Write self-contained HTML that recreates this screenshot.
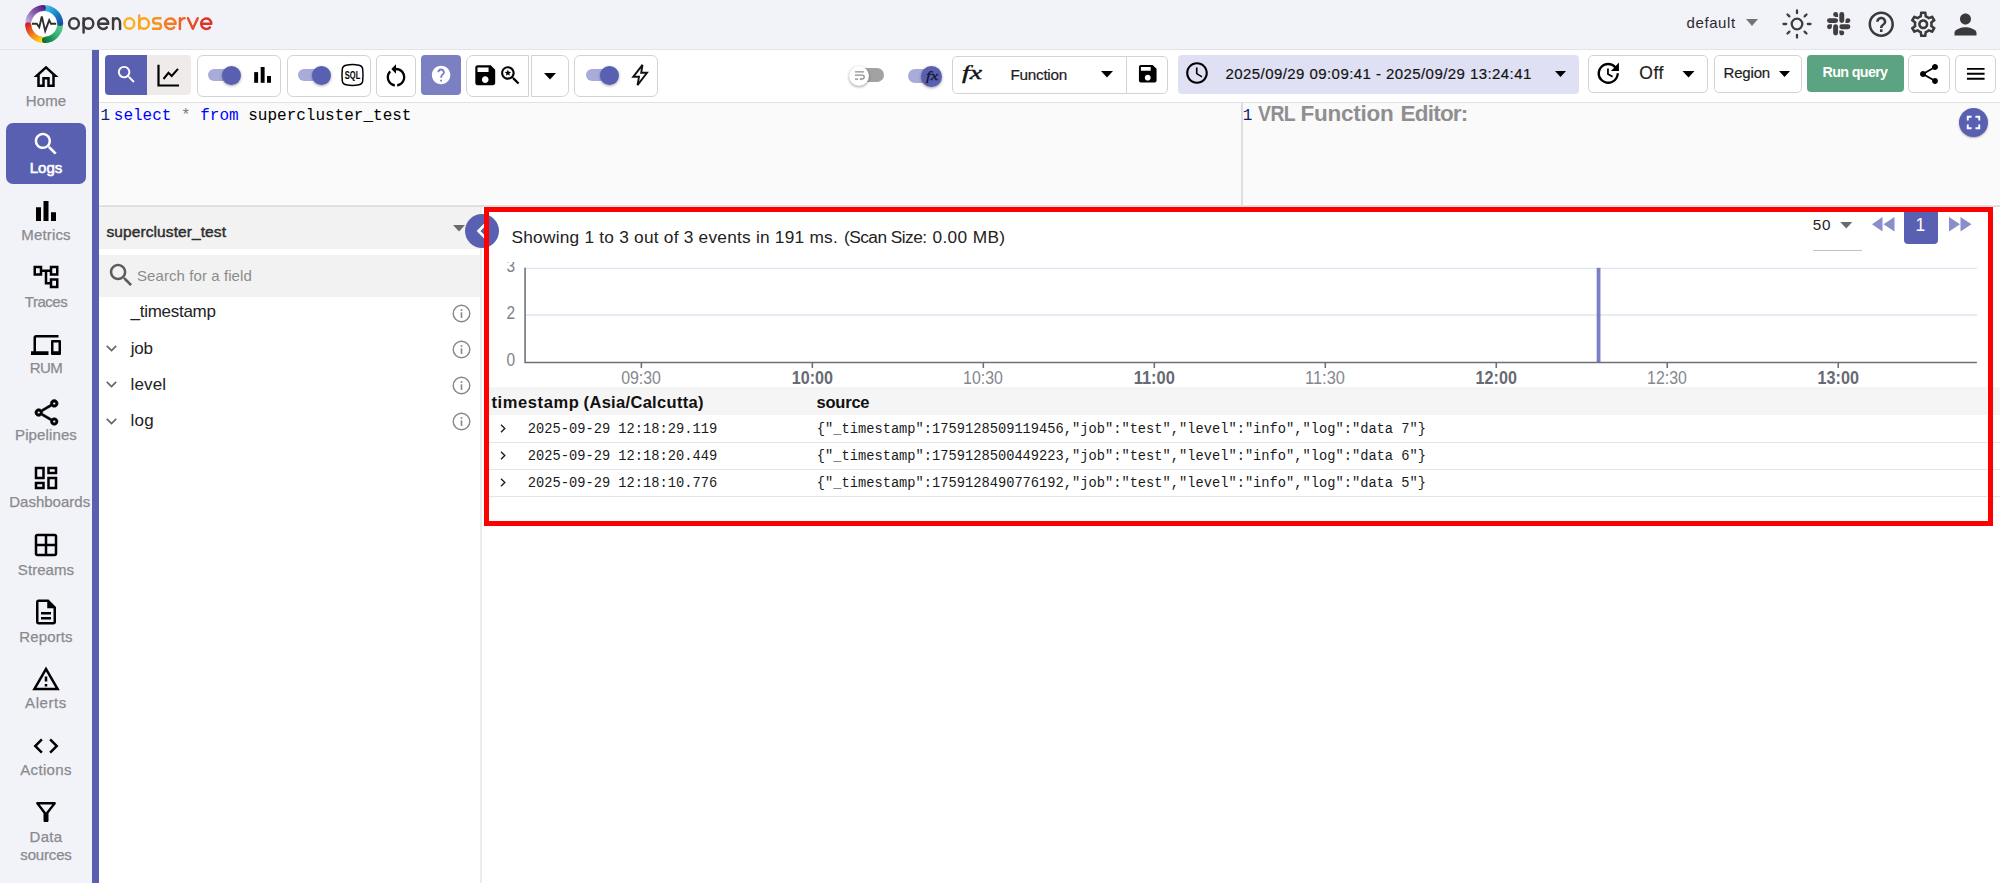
<!DOCTYPE html>
<html><head><meta charset="utf-8"><title>OpenObserve</title>
<style>
*{box-sizing:border-box;margin:0;padding:0}
html,body{width:2000px;height:883px;overflow:hidden;background:#fff;font-family:"Liberation Sans",sans-serif;color:#222}
.a{position:absolute}
.t{position:absolute;white-space:nowrap;line-height:1}
svg{position:absolute;display:block;overflow:visible}
.box{position:absolute;border:1.200px solid #d3d3d3;border-radius:6px;background:#fff}
.nl{position:absolute;left:0;width:92px;text-align:center;font-size:15px;color:#8a8a8d;line-height:18px;white-space:nowrap;-webkit-text-stroke:0.250px #8a8a8d}
.track{position:absolute;height:12px;border-radius:6px;background:#a9acd9}
.thumb{position:absolute;width:19px;height:19px;border-radius:50%;background:#5960b2;box-shadow:0 1px 3px rgba(0,0,0,.35)}
.mono{font-family:"Liberation Mono",monospace}
</style></head><body>
<!-- HEADER -->
<div class="a" id="hdr" style="left:0;top:0;width:2000px;height:50px;background:#f2f2f9;border-bottom:1px solid #e3e3ea"></div>
<!-- SIDEBAR -->
<div class="a" id="side" style="left:0;top:50px;width:92px;height:833px;background:#f2f2f9"></div>
<div class="a" id="pbar" style="left:92px;top:50px;width:7px;height:833px;background:#5960b2"></div>
<!-- TOOLBAR -->
<div class="a" id="tbar" style="left:99px;top:50px;width:1901px;height:53px;background:#fff;border-bottom:1px solid #e2e2e2"></div>
<!-- EDITOR -->
<div class="a" id="ed" style="left:99px;top:103px;width:1901px;height:102px;background:#fafafa"></div>
<div class="a" style="left:99px;top:204px;width:1901px;height:1.300px;background:#fff"></div><div class="a" style="left:99px;top:205.200px;width:1901px;height:2.300px;background:linear-gradient(#ededed,#d6d6d6 50%,#e6e6e6)"></div>
<div class="a" style="left:1241px;top:103px;width:2px;height:102px;background:#dedede"></div>
<!-- LEFT PANEL -->
<div class="a" id="lp" style="left:99px;top:207px;width:381px;height:676px;background:#fff"></div>
<div class="a" style="left:480px;top:207px;width:2.400px;height:676px;background:#ececec"></div>
<!--SIDENAV-->
<!-- Logs active -->
<div class="a" style="left:6px;top:123px;width:80px;height:61px;background:#5960b2;border-radius:7px"></div>
<!-- icons: 30px boxes centered at x=46 => left 31 ; top = 62+66.75k -->
<svg style="left:31px;top:62px" width="30" height="30" viewBox="0 0 24 24"><path fill="#000" d="M12 5.69l5 4.5V18h-2v-6H9v6H7v-7.81l5-4.5M12 3L2 12h3v8h6v-6h2v6h6v-8h3L12 3z"/></svg>
<div class="nl" style="top:92px;letter-spacing:0.16px">Home</div>
<svg style="left:31px;top:128.5px" width="30" height="30" viewBox="0 0 24 24"><path fill="#fff" d="M15.5 14h-.79l-.28-.27C15.41 12.59 16 11.11 16 9.5 16 5.91 13.09 3 9.5 3S3 5.91 3 9.5 5.91 16 9.5 16c1.61 0 3.09-.59 4.23-1.57l.27.28v.79l5 4.99L20.49 19l-4.99-5zm-6 0C7.01 14 5 11.99 5 9.5S7.01 5 9.5 5 14 7.01 14 9.5 11.99 14 9.5 14z"/></svg>
<div class="nl" style="top:159.300px;color:#fff;-webkit-text-stroke:0.600px #fff">Logs</div>
<svg style="left:31px;top:195.5px" width="30" height="30" viewBox="0 0 24 24"><path fill="#000" d="M4 9h4v11H4zm12 4h4v7h-4zm-6-9h4v16h-4z"/></svg>
<div class="nl" style="top:225.5px;letter-spacing:0.16px">Metrics</div>
<svg style="left:31px;top:262px" width="30" height="30" viewBox="0 0 24 24"><path fill="#000" d="M22 11V3h-7v3H9V3H2v8h7V8h2v10h4v3h7v-8h-7v3h-2V8h2v3h7zM7 9H4V5h3v4zm10 6h3v4h-3v-4zm0-10h3v4h-3V5z"/></svg>
<div class="nl" style="top:292.5px;letter-spacing:-0.48px">Traces</div>
<svg style="left:31px;top:329.500px" width="30" height="30" viewBox="0 0 24 24"><path fill="#000" d="M4 6h18V4H4c-1.1 0-2 .9-2 2v11H0v3h14v-3H4V6zm19 2h-6c-.55 0-1 .45-1 1v10c0 .55.45 1 1 1h6c.55 0 1-.45 1-1V9c0-.55-.45-1-1-1zm-1 9h-4v-7h4v7z"/></svg>
<div class="nl" style="top:359px;letter-spacing:-0.59px">RUM</div>
<svg style="left:30.500px;top:396.500px" width="31" height="31" viewBox="0 0 24 24"><path fill="#000" stroke="#000" stroke-width="0.400" d="M18 16.08c-.76 0-1.44.3-1.96.77L8.910 12.700c.05-.23.09-.46.09-.7s-.04-.47-.09-.7l7.050-4.110c.54.5 1.250.81 2.040.81 1.660 0 3-1.340 3-3s-1.340-3-3-3-3 1.340-3 3c0 .24.04.47.09.7L8.040 9.810C7.500 9.310 6.790 9 6 9c-1.660 0-3 1.340-3 3s1.340 3 3 3c.79 0 1.500-.31 2.040-.81l7.120 4.160c-.05.21-.08.43-.08.65 0 1.610 1.310 2.920 2.920 2.920s2.920-1.310 2.920-2.920c0-1.610-1.310-2.920-2.920-2.920zM18 4c.55 0 1 .45 1 1s-.45 1-1 1-1-.45-1-1 .45-1 1-1zM6 13c-.55 0-1-.45-1-1s.45-1 1-1 1 .45 1 1-.45 1-1 1zm12 7.020c-.55 0-1-.45-1-1s.45-1 1-1 1 .45 1 1-.45 1-1 1z"/></svg>
<div class="nl" style="top:425.5px;letter-spacing:0.12px">Pipelines</div>
<svg style="left:31px;top:463.200px" width="30" height="30" viewBox="0 0 24 24"><path fill="#000" d="M19 5v2h-4V5h4M9 5v6H5V5h4m10 8v6h-4v-6h4M9 17v2H5v-2h4M21 3h-8v6h8V3zM11 3H3v10h8V3zm10 8h-8v10h8V11zm-10 4H3v6h8v-6z"/></svg>
<div class="nl" style="top:492.500px;left:3.700px;letter-spacing:0.010px">Dashboards</div>
<svg style="left:31px;top:530.0px" width="30" height="30" viewBox="0 0 24 24"><path fill="#000" d="M19 3H5c-1.100 0-2 .900-2 2v14c0 1.100.900 2 2 2h14c1.100 0 2-.900 2-2V5c0-1.100-.900-2-2-2zm0 8h-6V5h6v6zm-8-6v6H5V5h6zm-6 8h6v6H5v-6zm8 6v-6h6v6h-6z"/></svg>
<div class="nl" style="top:560.6px;letter-spacing:0.07px">Streams</div>
<svg style="left:31px;top:597.0px" width="30" height="30" viewBox="0 0 24 24"><path fill="#000" d="M8 16h8v2H8zm0-4h8v2H8zm6-10H6c-1.100 0-2 .900-2 2v16c0 1.100.890 2 1.990 2H18c1.100 0 2-.900 2-2V8l-6-6zm4 18H6V4h7v5h5v11z"/></svg>
<div class="nl" style="top:627.6px;letter-spacing:0.13px">Reports</div>
<svg style="left:31px;top:663.5px" width="30" height="30" viewBox="0 0 24 24"><path fill="#000" d="M12 5.990L19.530 19H4.470L12 5.990M12 2L1 21h22L12 2zm1 14h-2v2h2v-2zm0-6h-2v4h2v-4z"/></svg>
<div class="nl" style="top:693.5px;letter-spacing:0.57px">Alerts</div>
<svg style="left:31px;top:730.5px" width="30" height="30" viewBox="0 0 24 24"><path fill="#000" d="M9.400 16.600L4.800 12l4.600-4.600L8 6l-6 6 6 6 1.400-1.400zm5.200 0l4.600-4.600-4.600-4.600L16 6l6 6-6 6-1.400-1.400z"/></svg>
<div class="nl" style="top:760.6px;letter-spacing:0.32px">Actions</div>
<svg style="left:31px;top:797.0px" width="30" height="30" viewBox="0 0 24 24"><path fill="#000" d="M7 6h10l-5.010 6.300L7 6zm-2.750-.39C6.270 8.200 10 13 10 13v6c0 .55.45 1 1 1h2c.55 0 1-.45 1-1v-6s3.720-4.800 5.740-7.390c.51-.66.04-1.610-.79-1.610H5.040c-.83 0-1.300.95-.79 1.610z"/></svg>
<div class="nl" style="top:827.6px;letter-spacing:0.27px">Data</div>
<div class="nl" style="top:845.6px;letter-spacing:-0.16px">sources</div>
<!--/SIDENAV-->
<!--TOOLS-->
<!-- LOGO -->
<svg style="left:24px;top:4px" width="40" height="40" viewBox="0 0 40 40">
<defs><linearGradient id="g1" gradientUnits="userSpaceOnUse" x1="4.20" y1="20.00" x2="21.59" y2="4.06"><stop offset="0" stop-color="#c3b6df"/><stop offset="0.5" stop-color="#8a5bb0"/><stop offset="1" stop-color="#551c80"/></linearGradient><linearGradient id="g2" gradientUnits="userSpaceOnUse" x1="20.20" y1="4.00" x2="36.14" y2="21.39"><stop offset="0" stop-color="#45bdea"/><stop offset="0.55" stop-color="#1384c4"/><stop offset="1" stop-color="#1d4b9e"/></linearGradient><linearGradient id="g3" gradientUnits="userSpaceOnUse" x1="36.20" y1="20.00" x2="18.81" y2="35.94"><stop offset="0" stop-color="#5ccc92"/><stop offset="0.5" stop-color="#2fae6e"/><stop offset="1" stop-color="#0a7038"/></linearGradient><linearGradient id="g4" gradientUnits="userSpaceOnUse" x1="20.20" y1="36.00" x2="4.26" y2="18.61"><stop offset="0" stop-color="#ffe01a"/><stop offset="0.45" stop-color="#f58a1f"/><stop offset="1" stop-color="#cf1f2a"/></linearGradient></defs>
<circle cx="20.2" cy="20.0" r="19.600" fill="#fff"/>
<g fill="none" stroke-width="6.100">
<path d="M36.19 19.44A16.0 16.0 0 0 1 20.76 35.99" stroke="url(#g3)" stroke-linecap="butt"/>
<path d="M17.97 4.16A16.0 16.0 0 0 1 36.16 18.88" stroke="url(#g2)" stroke-linecap="round"/>
<path d="M4.36 22.23A16.0 16.0 0 0 1 18.81 4.06" stroke="url(#g1)" stroke-linecap="round"/>
<path d="M22.43 35.84A16.0 16.0 0 0 1 4.26 21.39" stroke="url(#g4)" stroke-linecap="round"/>
<path d="M30.48 32.26A16.0 16.0 0 0 1 21.04 35.98" stroke="url(#g3)" stroke-linecap="round"/>
</g>
<path d="M8 19.800H12.800L15.300 23.200 17.800 12.400 21.200 26.900 25.200 16.100 27 19.800H32.200" fill="none" stroke="#2d2d2f" stroke-width="1.900" stroke-linejoin="miter" stroke-linecap="butt"/>
</svg>
<!-- wordmark drawn with strokes -->
<svg style="left:66px;top:10px" width="150" height="28" viewBox="0 0 150 28">
<g fill="none" stroke="#3b3b3d" stroke-width="2.450" stroke-linecap="round" stroke-linejoin="round">
<ellipse cx="8" cy="13.5" rx="4.9" ry="5.3"/>
<path d="M17.6 8.2V22.500"/><ellipse cx="22.4" cy="13.5" rx="4.9" ry="5.3"/>
<path d="M32.05 13.8H42.25A5.1 5.3 0 1 0 40.82 17.42"/>
<path d="M47.05 19V8.2M47.05 13a3.5 4.8 0 0 1 7 0V19"/>
</g>
<g fill="none" stroke-width="2.450" stroke-linecap="round" stroke-linejoin="round">
<ellipse cx="63.35" cy="13.5" rx="4.9" ry="5.3" stroke="#fbb31c"/>
<path d="M73.25 5.5V18.800" stroke="#f9a51d"/><ellipse cx="78" cy="13.500" rx="4.900" ry="5.300" stroke="#f9a51d"/>
<path d="M94.500 8.200h-4.800a2.600 2.650 0 0 0 0 5.300h2.600a2.650 2.650 0 0 1 0 5.300h-5.300" stroke="#f6921e"/>
<path d="M99.00 13.8H109.60A5.3 5.3 0 1 0 108.12 17.42" stroke="#f37a20"/>
<path d="M113.900 19V8.200M113.900 12.800a4.500 4.600 0 0 1 4.600-4.600" stroke="#ee6222"/>
<path d="M122 8.200l4.850 10.600 4.850-10.600" stroke="#e74c25"/>
<path d="M135.15 13.8H145.35A5.1 5.3 0 1 0 143.92 17.42" stroke="#db3428"/>
</g>
</svg>
<!-- header right -->
<div class="t" id="t_default" style="left:1686.500px;top:15.300px;font-size:15px;color:#2b2b2b;letter-spacing:0.6px">default</div>
<svg style="left:1746px;top:19px" width="12" height="7" viewBox="0 0 12 7"><path d="M0 0h12L6 7z" fill="#757575"/></svg>
<!-- sun -->
<svg style="left:1782px;top:9px" width="30" height="30" viewBox="0 0 30 30"><g fill="none" stroke="#3d3d3d" stroke-width="2.300" stroke-linecap="round"><circle cx="15" cy="15" r="5.300"/><path d="M15 1.500v2.700M15 25.800v2.700M1.500 15h2.700M25.800 15h2.700M5.500 5.500l1.900 1.900M22.600 22.600l1.900 1.900M5.500 24.500l1.900-1.900M22.600 7.400l1.900-1.900"/></g></svg>
<!-- slack -->
<svg style="left:1826.700px;top:11.900px" width="23.400" height="23.400" viewBox="0 0 24 24"><path fill="#3f3f3f" d="M5.042 15.165a2.528 2.528 0 0 1-2.52 2.523A2.528 2.528 0 0 1 0 15.165a2.527 2.527 0 0 1 2.522-2.52h2.52v2.52zM6.313 15.165a2.527 2.527 0 0 1 2.521-2.52 2.527 2.527 0 0 1 2.521 2.52v6.313A2.528 2.528 0 0 1 8.834 24a2.528 2.528 0 0 1-2.521-2.522v-6.313zM8.834 5.042a2.528 2.528 0 0 1-2.521-2.52A2.528 2.528 0 0 1 8.834 0a2.528 2.528 0 0 1 2.521 2.522v2.52H8.834zM8.834 6.313a2.528 2.528 0 0 1 2.521 2.521 2.528 2.528 0 0 1-2.521 2.521H2.522A2.528 2.528 0 0 1 0 8.834a2.528 2.528 0 0 1 2.522-2.521h6.312zM18.956 8.834a2.528 2.528 0 0 1 2.522-2.521A2.528 2.528 0 0 1 24 8.834a2.528 2.528 0 0 1-2.522 2.521h-2.522V8.834zM17.688 8.834a2.528 2.528 0 0 1-2.523 2.521 2.527 2.527 0 0 1-2.52-2.521V2.522A2.527 2.527 0 0 1 15.165 0a2.528 2.528 0 0 1 2.523 2.522v6.312zM15.165 18.956a2.528 2.528 0 0 1 2.523 2.522A2.528 2.528 0 0 1 15.165 24a2.527 2.527 0 0 1-2.52-2.522v-2.522h2.52zM15.165 17.688a2.527 2.527 0 0 1-2.52-2.523 2.526 2.526 0 0 1 2.52-2.52h6.313A2.527 2.527 0 0 1 24 15.165a2.528 2.528 0 0 1-2.522 2.523h-6.313z"/></svg>
<!-- help -->
<svg style="left:1866px;top:8.500px" width="30.500" height="30.500" viewBox="0 0 24 24"><path fill="#3a3a3a" d="M11 18h2v-2h-2v2zm1-16C6.480 2 2 6.480 2 12s4.480 10 10 10 10-4.480 10-10S17.520 2 12 2zm0 18c-4.410 0-8-3.590-8-8s3.590-8 8-8 8 3.590 8 8-3.590 8-8 8zm0-14c-2.210 0-4 1.790-4 4h2c0-1.100.900-2 2-2s2 .900 2 2c0 2-3 1.750-3 5h2c0-2.250 3-2.500 3-5 0-2.210-1.790-4-4-4z"/></svg>
<!-- settings -->
<svg style="left:1907.500px;top:8.500px" width="30.500" height="30.500" viewBox="0 0 24 24"><path fill="#3a3a3a" d="M19.430 12.980c.04-.32.070-.64.070-.98 0-.34-.03-.66-.07-.98l2.110-1.650c.19-.15.240-.42.120-.64l-2-3.460c-.09-.16-.26-.25-.44-.25-.06 0-.12.010-.17.030l-2.490 1c-.52-.4-1.080-.73-1.690-.98l-.38-2.650C14.460 2.180 14.250 2 14 2h-4c-.25 0-.46.180-.49.420l-.38 2.650c-.61.250-1.170.59-1.690.98l-2.490-1c-.06-.02-.12-.03-.18-.03-.17 0-.34.090-.43.250l-2 3.460c-.13.220-.07.490.12.640l2.110 1.650c-.04.320-.07.650-.07.980 0 .33.030.66.070.98l-2.110 1.650c-.19.150-.24.420-.12.640l2 3.460c.09.160.26.250.44.250.06 0 .12-.01.170-.03l2.490-1c.52.400 1.080.73 1.690.98l.38 2.650c.03.240.24.420.49.420h4c.25 0 .46-.18.490-.42l.38-2.650c.61-.25 1.170-.59 1.690-.98l2.490 1c.06.020.12.030.18.030.17 0 .34-.09.43-.25l2-3.460c.12-.22.070-.49-.12-.64l-2.110-1.650zm-1.980-1.710c.04.310.05.520.05.730 0 .21-.02.430-.05.730l-.14 1.130.89.700 1.080.84-.7 1.210-1.270-.51-1.040-.42-.9.680c-.43.320-.84.560-1.250.73l-1.060.43-.16 1.130-.2 1.350h-1.400l-.19-1.350-.16-1.130-1.060-.43c-.43-.18-.83-.41-1.230-.71l-.91-.7-1.060.43-1.270.51-.7-1.210 1.080-.84.890-.7-.14-1.130c-.03-.31-.05-.54-.05-.74s.02-.43.050-.73l.14-1.130-.89-.7-1.080-.84.700-1.210 1.270.51 1.040.42.900-.68c.43-.32.840-.56 1.250-.73l1.060-.43.160-1.130.2-1.350h1.390l.19 1.350.16 1.130 1.060.43c.43.180.83.410 1.230.71l.91.700 1.060-.43 1.270-.51.7 1.210-1.070.85-.89.700.14 1.130zM12 8c-2.210 0-4 1.790-4 4s1.790 4 4 4 4-1.790 4-4-1.790-4-4-4zm0 6c-1.100 0-2-.9-2-2s.9-2 2-2 2 .9 2 2-.9 2-2 2z"/></svg>
<!-- person -->
<svg style="left:1948.500px;top:7.500px" width="33" height="33" viewBox="0 0 24 24"><path fill="#3a3a3a" d="M12 12c2.210 0 4-1.790 4-4s-1.790-4-4-4-4 1.790-4 4 1.790 4 4 4zm0 2c-2.670 0-8 1.340-8 4v2h16v-2c0-2.660-5.330-4-8-4z"/></svg>
<!--TB-->
<!-- search/visualize buttons -->
<div class="a" style="left:105px;top:55px;width:42px;height:40px;background:#5960b2;border-radius:4px 0 0 4px"></div>
<div class="a" style="left:147px;top:55px;width:44px;height:40px;background:#f0ebeb;border-radius:0 4px 4px 0"></div>
<svg style="left:114.700px;top:63.200px" width="23" height="23" viewBox="0 0 24 24"><path fill="#fff" d="M15.5 14h-.79l-.28-.27C15.41 12.59 16 11.11 16 9.5 16 5.91 13.09 3 9.5 3S3 5.91 3 9.5 5.91 16 9.5 16c1.61 0 3.09-.59 4.23-1.57l.27.28v.79l5 4.990L20.490 19l-4.990-5zm-6 0C7.010 14 5 11.990 5 9.500S7.010 5 9.500 5 14 7.010 14 9.500 11.990 14 9.500 14z"/></svg>
<svg style="left:157px;top:64px" width="24" height="24" viewBox="0 0 24 24"><path d="M1.500 0.800V21.500H22" fill="none" stroke="#000" stroke-width="2.200"/><path d="M6.500 15l5-6.200 3.200 3.200L21 4.800" fill="none" stroke="#000" stroke-width="2" stroke-linejoin="miter"/></svg>
<!-- box1 histogram toggle -->
<div class="box" style="left:197px;top:55px;width:84px;height:41.600px"></div>
<div class="track" style="left:208px;top:69px;width:30px"></div><div class="thumb" style="left:221.500px;top:65.500px"></div>
<svg style="left:250px;top:63px" width="24" height="24" viewBox="250 63 24 24"><rect x="254.200" y="72.100" width="3.900" height="10.700"/><rect x="260.700" y="67" width="3.900" height="15.800"/><rect x="267" y="76" width="4" height="6.800"/></svg>
<!-- box2 sql toggle -->
<div class="box" style="left:287px;top:55px;width:84px;height:41.600px"></div>
<div class="track" style="left:298px;top:69px;width:30px"></div><div class="thumb" style="left:311.500px;top:65.500px"></div>
<svg style="left:341px;top:64px" width="23" height="22" viewBox="0 0 23 22"><path d="M5 1.200Q11.500 0 18 1.200Q21.300 1.800 21.700 5Q22.300 11 21.700 17Q21.300 20.200 18 20.800Q11.500 22 5 20.800Q1.700 20.200 1.300 17Q.7 11 1.300 5Q1.700 1.800 5 1.200Z" fill="none" stroke="#000" stroke-width="1.450"/><text x="11.500" y="14.900" font-family="Liberation Sans" font-weight="bold" font-size="10.800" text-anchor="middle" fill="#000" textLength="15.500" lengthAdjust="spacingAndGlyphs">SQL</text></svg>
<!-- box3 refresh -->
<div class="box" style="left:376px;top:55px;width:40px;height:41.600px;border-radius:5px"></div>
<svg style="left:381.500px;top:62px" width="28" height="28" viewBox="0 0 24 24"><path fill="#000" d="M12 5V2L8 6l4 4V7c3.310 0 6 2.690 6 6 0 2.970-2.170 5.430-5 5.910v2.020c3.950-.49 7-3.850 7-7.930 0-4.420-3.580-8-8-8zm-6 8c0-1.650.67-3.150 1.760-4.240L6.340 7.340C4.900 8.790 4 10.790 4 13c0 4.080 3.050 7.440 7 7.930v-2.020c-2.830-.48-5-2.940-5-5.910z"/></svg>
<!-- help btn -->
<div class="a" style="left:421px;top:55px;width:40px;height:40px;background:#7b80c3;border-radius:4px"></div>
<svg style="left:429.600px;top:63.700px" width="22.200" height="22.200" viewBox="0 0 24 24"><path fill="#fff" d="M12 2C6.480 2 2 6.480 2 12s4.480 10 10 10 10-4.480 10-10S17.520 2 12 2zm1 17h-2v-2h2v2zm2.070-7.750l-.9.920C13.450 12.900 13 13.500 13 15h-2v-.5c0-1.100.45-2.100 1.170-2.830l1.240-1.260c.37-.36.59-.86.59-1.410 0-1.100-.9-2-2-2s-2 .9-2 2H8c0-2.210 1.790-4 4-4s4 1.790 4 4c0 .88-.36 1.680-.93 2.250z"/></svg>
<!-- box4 saved views -->
<div class="box" style="left:466px;top:55px;width:63px;height:41.600px;border-radius:7px 0 0 7px"></div>
<div class="box" style="left:530.500px;top:55px;width:38.500px;height:41.600px;border-radius:0 7px 7px 0"></div>
<svg style="left:471.500px;top:62px" width="26.500" height="26.500" viewBox="0 0 24 24"><path fill="#000" d="M17 3H5c-1.110 0-2 .9-2 2v14c0 1.100.89 2 2 2h14c1.100 0 2-.9 2-2V7l-4-4zm-5 16c-1.660 0-3-1.340-3-3s1.340-3 3-3 3 1.340 3 3-1.340 3-3 3zm3-10H5V5h10v4z"/></svg>
<svg style="left:497.500px;top:62.500px" width="25" height="25" viewBox="0 0 24 24"><path fill="#000" d="M15.500 14h-.79l-.28-.27C15.410 12.590 16 11.110 16 9.500 16 5.910 13.090 3 9.500 3S3 5.910 3 9.500 5.910 16 9.500 16c1.610 0 3.090-.59 4.230-1.570l.27.28v.79l5 4.990L20.490 19l-4.990-5zm-6 0C7.010 14 5 11.990 5 9.500S7.010 5 9.500 5 14 7.010 14 9.500 11.990 14 9.500 14z"/><path fill="#000" d="M9.500 6.300l.85 2.100 2.250.15-1.730 1.450.56 2.200-1.930-1.200-1.930 1.200.56-2.200L6.400 8.550l2.250-.15z"/></svg>
<svg style="left:544px;top:72.500px" width="12" height="6.500" viewBox="0 0 12 6.500"><path d="M0 0h12L6 6.500z" fill="#000"/></svg>
<!-- box5 quick mode -->
<div class="box" style="left:574px;top:55px;width:84px;height:41.600px"></div>
<div class="track" style="left:586px;top:69px;width:30px"></div><div class="thumb" style="left:599.500px;top:65.500px"></div>
<svg style="left:630px;top:63px" width="20" height="24" viewBox="0 0 20 24"><path d="M12.500 1.800L3.200 13.800H9L7.500 22.200 17 9.800H11.200Z" fill="none" stroke="#111" stroke-width="1.900" stroke-linejoin="miter"/></svg>
<!-- wrap toggle -->
<div class="a" style="left:852px;top:67.800px;width:32px;height:14px;border-radius:7px;background:#a2a2a2"></div>
<div class="a" style="left:848.800px;top:65.500px;width:20.600px;height:20.600px;border-radius:50%;background:#fff;box-shadow:0 1px 3px rgba(0,0,0,.4)"></div>
<svg style="left:855.200px;top:70.500px" width="10" height="9" viewBox="0 0 10 9"><path d="M0 .8h9M0 4.200h7.300a1.900 1.900 0 0 1 0 3.800H5.500M0 8h3.200" fill="none" stroke="#8d8d8d" stroke-width="1.250"/><path d="M6.300 6.400L4.600 8 6.300 9.600z" fill="#8d8d8d"/></svg>
<!-- fx toggle -->
<div class="a" style="left:907.800px;top:69px;width:32px;height:14px;border-radius:7px;background:#a9acd9"></div>
<div class="a" style="left:921.100px;top:65.500px;width:21px;height:21px;border-radius:50%;background:#5960b2;box-shadow:0 1px 3px rgba(0,0,0,.4)"></div>
<div class="t" id="fx_small" style="left:925.500px;top:69px;font-family:'Liberation Serif',serif;font-style:italic;font-size:13.500px;color:#15172e;-webkit-text-stroke:0.300px #15172e;transform:scaleX(1.250);transform-origin:0 0">fx</div>
<!-- function select -->
<div class="box" style="left:952px;top:55.500px;width:174.500px;height:38.800px;border-radius:5px 0 0 5px"></div>
<div class="box" style="left:1126px;top:55.500px;width:42px;height:38.800px;border-radius:0 5px 5px 0"></div>
<div class="t" id="fx_big" style="left:962px;top:63.300px;font-family:'Liberation Serif',serif;font-style:italic;font-size:19px;color:#111;-webkit-text-stroke:0.400px #111;transform:scaleX(1.460);transform-origin:0 0">fx</div>
<div class="t" id="t_function" style="-webkit-text-stroke:0.200px #1a1a1a;left:1010.500px;top:66.500px;font-size:15.300px;color:#1d1d1d;letter-spacing:-0.28px">Function</div>
<svg style="left:1101px;top:71px" width="12" height="6.500" viewBox="0 0 12 6.500"><path d="M0 0h12L6 6.500z" fill="#000"/></svg>
<svg style="left:1136px;top:62px" width="23.500" height="23.500" viewBox="0 0 24 24"><path fill="#000" d="M17 3H5c-1.110 0-2 .9-2 2v14c0 1.100.89 2 2 2h14c1.100 0 2-.9 2-2V7l-4-4zm-5 16c-1.660 0-3-1.340-3-3s1.340-3 3-3 3 1.340 3 3-1.340 3-3 3zm3-10H5V5h10v4z"/></svg>
<!-- datetime -->
<div class="a" style="left:1178px;top:55px;width:401px;height:38.500px;background:#dfe0f3;border-radius:4px"></div>
<svg style="left:1184.200px;top:60px" width="26" height="26" viewBox="0 0 24 24"><path fill="#000" d="M11.990 2C6.470 2 2 6.480 2 12s4.470 10 9.990 10C17.520 22 22 17.520 22 12S17.520 2 11.990 2zM12 20c-4.420 0-8-3.580-8-8s3.580-8 8-8 8 3.580 8 8-3.580 8-8 8zm.5-13H11v6l5.250 3.150.75-1.230-4.500-2.670z"/></svg>
<div class="t" id="t_date" style="-webkit-text-stroke:0.200px #1a1a1a;left:1225.500px;top:66px;font-size:15px;color:#111;letter-spacing:0.43px">2025/09/29 09:09:41 - 2025/09/29 13:24:41</div>
<svg style="left:1554.500px;top:71px" width="11" height="6" viewBox="0 0 12 6.500"><path d="M0 0h12L6 6.500z" fill="#000"/></svg>
<!-- refresh off -->
<div class="box" style="left:1588px;top:55px;width:120px;height:38px;border-radius:5px"></div>
<svg style="left:1594px;top:59px" width="28.500" height="28.500" viewBox="0 0 24 24"><path fill="#000" d="M21 10.120h-6.780l2.740-2.820c-2.730-2.700-7.150-2.800-9.880-.1-2.730 2.710-2.730 7.080 0 9.790s7.150 2.710 9.880 0C18.320 15.650 19 14.080 19 12.100h2c0 1.980-.88 4.550-2.640 6.290-3.510 3.480-9.210 3.480-12.720 0-3.500-3.470-3.530-9.110-.02-12.580s9.140-3.470 12.650 0L21 3v7.120zM12.500 8v4.250l3.500 2.080-.72 1.210L11 13V8h1.500z"/></svg>
<div class="t" id="t_off" style="-webkit-text-stroke:0.200px #1a1a1a;left:1639.200px;top:64.800px;font-size:17.500px;color:#1d1d1d;letter-spacing:0.63px">Off</div>
<svg style="left:1682.200px;top:70.800px" width="13" height="6.500" viewBox="0 0 12 6.500"><path d="M0 0h12L6 6.500z" fill="#000"/></svg>
<!-- region -->
<div class="box" style="left:1713.500px;top:55px;width:88.500px;height:38px;border-radius:5px"></div>
<div class="t" id="t_region" style="-webkit-text-stroke:0.200px #1a1a1a;left:1723.500px;top:65px;font-size:15px;color:#1d1d1d;letter-spacing:-0.17px">Region</div>
<svg style="left:1779px;top:70.500px" width="11" height="6" viewBox="0 0 12 6.500"><path d="M0 0h12L6 6.500z" fill="#000"/></svg>
<!-- run query -->
<div class="a" style="left:1807px;top:55px;width:96.500px;height:37px;background:#5ca381;border-radius:4px"></div>
<div class="t" id="t_run" style="left:1822.500px;top:65px;font-size:14.300px;font-weight:bold;color:#fff;letter-spacing:-0.64px">Run query</div>
<!-- share / menu -->
<div class="box" style="left:1908px;top:55px;width:41.500px;height:38px;border-radius:5px"></div>
<svg style="left:1917px;top:61.500px" width="24" height="24" viewBox="0 0 24 24"><path fill="#000" d="M18 16.080c-.76 0-1.440.3-1.960.77L8.910 12.700c.05-.23.09-.46.09-.7s-.04-.47-.09-.7l7.050-4.110c.54.5 1.250.81 2.040.81 1.660 0 3-1.340 3-3s-1.340-3-3-3-3 1.340-3 3c0 .24.04.47.09.7L8.040 9.810C7.500 9.310 6.790 9 6 9c-1.660 0-3 1.340-3 3s1.340 3 3 3c.79 0 1.500-.31 2.040-.81l7.120 4.160c-.05.21-.08.43-.08.65 0 1.610 1.310 2.920 2.920 2.920 1.610 0 2.920-1.310 2.920-2.920s-1.310-2.920-2.920-2.920z"/></svg>
<div class="box" style="left:1954.500px;top:55px;width:41.500px;height:38px;border-radius:5px"></div>
<svg style="left:1963.500px;top:62px" width="23.500" height="23.500" viewBox="0 0 24 24"><path fill="#000" d="M3 18h18v-2H3v2zm0-5h18v-2H3v2zm0-7v2h18V6H3z"/></svg>
<!-- editor text -->
<div class="t mono" style="left:100.500px;top:108.300px;font-size:16px;color:#0b216f">1</div>
<div class="t mono" id="t_sql" style="left:113.800px;top:108.300px;font-size:16px;color:#000;letter-spacing:0px"><span style="color:#0000ff">select</span> <span style="color:#7a7a7a">*</span> <span style="color:#0000ff">from</span> supercluster_test</div>
<div class="t mono" style="left:1242.800px;top:108.300px;font-size:16px;color:#0b216f">1</div>
<div class="t" id="t_vrl1" style="left:1257.500px;top:102.500px;font-size:22.500px;font-weight:bold;color:#8f8f8f;letter-spacing:-0.600px;transform:scaleX(0.860);transform-origin:0 0">VRL</div><div class="t" id="t_vrl2" style="left:1300.500px;top:102.500px;font-size:22.500px;font-weight:bold;color:#8f8f8f;letter-spacing:-0.25px">Function</div><div class="t" id="t_vrl3" style="left:1400.500px;top:102.500px;font-size:22.500px;font-weight:bold;color:#8f8f8f;letter-spacing:-0.78px">Editor:</div>
<!-- fullscreen btn -->
<div class="a" style="left:1959px;top:108px;width:29px;height:29px;border-radius:50%;background:#5960b2;box-shadow:0 1px 2px rgba(0,0,0,.3)"></div>
<svg style="left:1962px;top:111px" width="23" height="23" viewBox="0 0 24 24"><path fill="#fff" d="M7 14H5v5h5v-2H7v-3zm-2-4h2V7h3V5H5v5zm12 7h-3v2h5v-5h-2v3zM14 5v2h3v3h2V5h-5z"/></svg>
<!--/TB-->
<!--/TOOLS-->
<!--FIELDS-->
<!-- stream select -->
<div class="a" style="left:99px;top:207px;width:381px;height:42px;background:#f2f2f2"></div>
<div class="t" id="t_stream" style="left:106.500px;top:223.700px;font-size:15.500px;font-weight:normal;-webkit-text-stroke:0.450px #2e2e2e;color:#2e2e2e;letter-spacing:0.09px">supercluster_test</div>
<svg style="left:453px;top:225px" width="12" height="6.500" viewBox="0 0 12 6.500"><path d="M0 0h12L6 6.500z" fill="#6b6b6b"/></svg>
<!-- search field -->
<div class="a" style="left:99px;top:254.500px;width:381px;height:42.500px;background:#f2f2f2"></div>
<svg style="left:105.700px;top:259.700px" width="30.500" height="30.500" viewBox="0 0 24 24"><path fill="#5d5d5d" d="M15.500 14h-.79l-.28-.27C15.410 12.590 16 11.110 16 9.500 16 5.910 13.090 3 9.500 3S3 5.910 3 9.500 5.910 16 9.500 16c1.610 0 3.090-.59 4.230-1.570l.27.28v.79l5 4.990L20.490 19l-4.990-5zm-6 0C7.010 14 5 11.990 5 9.500S7.010 5 9.500 5 14 7.010 14 9.500 11.990 14 9.500 14z"/></svg>
<div class="t" id="t_searchph" style="left:137px;top:267.500px;font-size:15px;color:#8c8c8c;letter-spacing:0.08px">Search for a field</div>
<!-- field rows -->
<div class="t" id="t_f0" style="left:130.500px;top:302.500px;font-size:17px;color:#222;letter-spacing:-0.27px">_timestamp</div>
<div class="t" id="t_f1" style="left:130.800px;top:340px;font-size:17px;color:#222;letter-spacing:-0.270px">job</div>
<div class="t" id="t_f2" style="left:130.500px;top:375.700px;font-size:17px;color:#222;letter-spacing:0.150px">level</div>
<div class="t" id="t_f3" style="left:130.500px;top:411.500px;font-size:17px;color:#222;letter-spacing:0.300px">log</div>
<svg style="left:106px;top:345px" width="11" height="7" viewBox="0 0 11 7"><path d="M.8 .8L5.500 5.500 10.200 .8" fill="none" stroke="#666" stroke-width="1.650"/></svg>
<svg style="left:106px;top:381px" width="11" height="7" viewBox="0 0 11 7"><path d="M.8 .8L5.500 5.500 10.200 .8" fill="none" stroke="#666" stroke-width="1.650"/></svg>
<svg style="left:106px;top:417.500px" width="11" height="7" viewBox="0 0 11 7"><path d="M.8 .8L5.500 5.500 10.200 .8" fill="none" stroke="#666" stroke-width="1.650"/></svg>
<svg style="left:452px;top:304px" width="19" height="19" viewBox="0 0 19 19"><circle cx="9.500" cy="9.500" r="8.300" fill="none" stroke="#868686" stroke-width="1.400"/><rect x="8.700" y="8.300" width="1.600" height="5.600" fill="#868686"/><rect x="8.700" y="5.200" width="1.600" height="1.700" fill="#868686"/></svg>
<svg style="left:452px;top:339.500px" width="19" height="19" viewBox="0 0 19 19"><circle cx="9.500" cy="9.500" r="8.300" fill="none" stroke="#868686" stroke-width="1.400"/><rect x="8.700" y="8.300" width="1.600" height="5.600" fill="#868686"/><rect x="8.700" y="5.200" width="1.600" height="1.700" fill="#868686"/></svg>
<svg style="left:452px;top:375.500px" width="19" height="19" viewBox="0 0 19 19"><circle cx="9.500" cy="9.500" r="8.300" fill="none" stroke="#868686" stroke-width="1.400"/><rect x="8.700" y="8.300" width="1.600" height="5.600" fill="#868686"/><rect x="8.700" y="5.200" width="1.600" height="1.700" fill="#868686"/></svg>
<svg style="left:452px;top:412px" width="19" height="19" viewBox="0 0 19 19"><circle cx="9.500" cy="9.500" r="8.300" fill="none" stroke="#868686" stroke-width="1.400"/><rect x="8.700" y="8.300" width="1.600" height="5.600" fill="#868686"/><rect x="8.700" y="5.200" width="1.600" height="1.700" fill="#868686"/></svg>
<!-- collapse circle -->
<div class="a" style="left:465px;top:214px;width:34px;height:34px;border-radius:50%;background:#5960b2"></div>
<svg style="left:476px;top:222px" width="12" height="18" viewBox="0 0 12 18"><path d="M10 1.500L2.500 9 10 16.500" fill="none" stroke="#fff" stroke-width="2.600"/></svg>
<!--/FIELDS-->
<!--RESULTS-->
<div class="t" id="t_showA" style="left:511.500px;top:229.200px;font-size:17.300px;color:#222;letter-spacing:0.229px">Showing 1 to 3 out of 3 events in 191 ms.</div><div class="t" id="t_showB" style="left:844px;top:229.200px;font-size:17.300px;color:#222;letter-spacing:-0.528px">(Scan Size:</div><div class="t" id="t_showC" style="left:932.500px;top:229.200px;font-size:17.300px;color:#222;letter-spacing:0.354px">0.00 MB)</div>
<!-- pagination -->
<div class="t" id="t_50" style="left:1812.800px;top:217px;font-size:15.300px;color:#222;letter-spacing:0.600px">50</div>
<svg style="left:1840px;top:222px" width="12.500" height="6.500" viewBox="0 0 12 6.500"><path d="M0 0h12L6 6.500z" fill="#6b6b6b"/></svg>
<div class="a" style="left:1812.500px;top:250px;width:49px;height:1px;background:#c2c2c2"></div>
<svg style="left:1872px;top:217px" width="22.500" height="14.500" viewBox="0 0 22.500 14.500"><path d="M0 7.250L10.500 0V14.500zM11.500 7.250L22.500 0V14.500z" fill="#8a8ec9"/></svg>
<div class="a" style="left:1904px;top:209px;width:33.500px;height:35px;background:#5960b2;border-radius:0 0 4px 4px"></div>
<div class="t" style="left:1915.500px;top:217px;font-size:17.500px;color:#fff">1</div>
<svg style="left:1948.500px;top:217px" width="22.500" height="14.500" viewBox="0 0 22.500 14.500"><path d="M0 0L11 7.250 0 14.500zM11.500 0L22.500 7.250 11.500 14.500z" fill="#8a8ec9"/></svg>
<!-- chart -->
<svg style="left:484px;top:261.800px;overflow:hidden" width="1510" height="126.200" viewBox="484 261.800 1510 126.200">
<g stroke="#e0e6f1" stroke-width="1.300"><path d="M525 268.200H1977M525 314.800H1977"/></g>
<rect x="1596.700" y="267.700" width="3.800" height="94.800" fill="#7a7fc6"/>
<g stroke="#6e7079" stroke-width="1.550" fill="none"><path d="M525 267.500V363.150M524.150 362.300H1977"/>
<path d="M641.3 362.300v5.400M812.3 362.300v5.400M983.3 362.300v5.400M1154.3 362.300v5.400M1325.3 362.300v5.400M1496.3 362.300v5.400M1667.3 362.300v5.400M1838.3 362.300v5.400"/></g>
<g font-family="Liberation Sans" font-size="17.500" fill="#7e8089" text-anchor="end"><text x="515" y="272.3" textLength="8.600" lengthAdjust="spacingAndGlyphs">3</text><text x="515" y="318.8" textLength="8.600" lengthAdjust="spacingAndGlyphs">2</text><text x="515" y="366.1" textLength="8.600" lengthAdjust="spacingAndGlyphs">0</text></g>
<g font-family="Liberation Sans" font-size="18" fill="#85878f" text-anchor="middle"><text x="641" y="384" textLength="39.800" lengthAdjust="spacingAndGlyphs">09:30</text><text x="983" y="384" textLength="39.800" lengthAdjust="spacingAndGlyphs">10:30</text><text x="1325" y="384" textLength="39.800" lengthAdjust="spacingAndGlyphs">11:30</text><text x="1667" y="384" textLength="39.800" lengthAdjust="spacingAndGlyphs">12:30</text></g>
<g font-family="Liberation Sans" font-size="17.800" font-weight="bold" fill="#676a73" text-anchor="middle"><text x="812.3" y="384" textLength="41.300" lengthAdjust="spacingAndGlyphs">10:00</text><text x="1154.3" y="384" textLength="41.300" lengthAdjust="spacingAndGlyphs">11:00</text><text x="1496.3" y="384" textLength="41.300" lengthAdjust="spacingAndGlyphs">12:00</text><text x="1838.3" y="384" textLength="41.300" lengthAdjust="spacingAndGlyphs">13:00</text></g>
</svg>
<!-- table -->
<div class="a" style="left:484px;top:387.300px;width:1516px;height:28.200px;background:#f5f5f5"></div>
<div class="t" id="t_th1a" style="left:491.500px;top:393.500px;font-size:16.500px;font-weight:bold;color:#111;letter-spacing:0.596px">timestamp</div><div class="t" id="t_th1b" style="left:583.600px;top:393.500px;font-size:16.500px;font-weight:bold;color:#111;letter-spacing:0.312px">(Asia/Calcutta)</div>
<div class="t" id="t_th2" style="left:816.500px;top:393.500px;font-size:16.500px;font-weight:bold;color:#111;letter-spacing:-0.22px">source</div>
<div class="a" style="left:484px;top:442px;width:1516px;height:1.200px;background:#e3e5ed"></div>
<div class="a" style="left:484px;top:469px;width:1516px;height:1.200px;background:#e3e5ed"></div>
<div class="a" style="left:484px;top:496px;width:1516px;height:1.200px;background:#e3e5ed"></div>
<div class="t mono" id="t_r1a" style="left:527.800px;top:422.5px;font-size:13.730px;color:#1a1a1a">2025-09-29 12:18:29.119</div>
<div class="t mono" id="t_r1b" style="left:816.800px;top:423px;font-size:13.730px;color:#1a1a1a">{"_timestamp":1759128509119456,"job":"test","level":"info","log":"data 7"}</div>
<div class="t mono" style="left:527.800px;top:449.5px;font-size:13.730px;color:#1a1a1a">2025-09-29 12:18:20.449</div>
<div class="t mono" style="left:816.800px;top:450px;font-size:13.730px;color:#1a1a1a">{"_timestamp":1759128500449223,"job":"test","level":"info","log":"data 6"}</div>
<div class="t mono" style="left:527.800px;top:476.5px;font-size:13.730px;color:#1a1a1a">2025-09-29 12:18:10.776</div>
<div class="t mono" style="left:816.800px;top:477px;font-size:13.730px;color:#1a1a1a">{"_timestamp":1759128490776192,"job":"test","level":"info","log":"data 5"}</div>
<div class="a" style="left:1986.800px;top:387px;width:1.400px;height:134px;background:rgba(255,255,255,.8)"></div>
<svg style="left:499.500px;top:424px" width="6" height="9" viewBox="0 0 6 9"><path d="M1 .8L4.800 4.500 1 8.200" fill="none" stroke="#222" stroke-width="1.400"/></svg>
<svg style="left:499.500px;top:451px" width="6" height="9" viewBox="0 0 6 9"><path d="M1 .8L4.800 4.500 1 8.200" fill="none" stroke="#222" stroke-width="1.400"/></svg>
<svg style="left:499.500px;top:478px" width="6" height="9" viewBox="0 0 6 9"><path d="M1 .8L4.800 4.500 1 8.200" fill="none" stroke="#222" stroke-width="1.400"/></svg>
<!--/RESULTS-->
<!--RED-->
<div class="a" style="left:484px;top:207px;width:1509px;height:319px;border:5px solid #ff0000"></div>
<!--/RED-->
</body></html>
